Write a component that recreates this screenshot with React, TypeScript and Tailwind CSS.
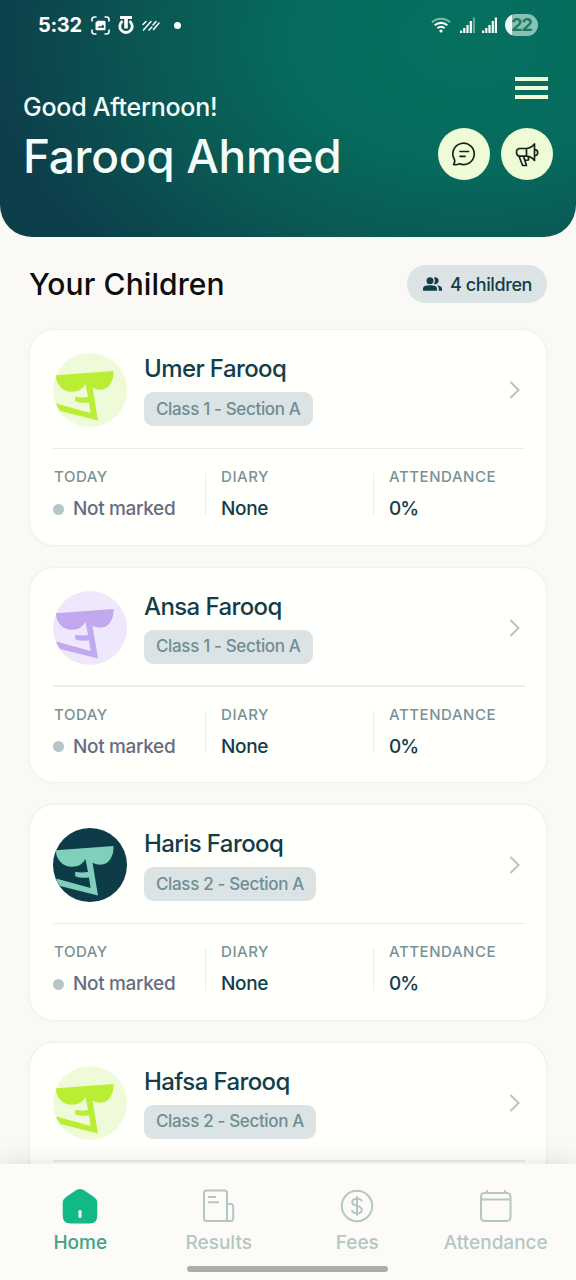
import type { ReactNode } from "react";

interface Child {
  name: string;
  section: string;
  bg: string;
  fg: string;
  stats: { today: string; diary: string; attendance: string } | null;
}

const EMPTY_STATS = { today: "Not marked", diary: "None", attendance: "0%" };

const CHILDREN: Child[] = [
  { name: "Umer Farooq", section: "Class 1 - Section A", bg: "#effbd8", fg: "#b9ee35", stats: EMPTY_STATS },
  { name: "Ansa Farooq", section: "Class 1 - Section A", bg: "#efe8fc", fg: "#c2a8ee", stats: EMPTY_STATS },
  { name: "Haris Farooq", section: "Class 2 - Section A", bg: "#0d3c48", fg: "#80cfba", stats: EMPTY_STATS },
  { name: "Hafsa Farooq", section: "Class 2 - Section A", bg: "#effbd8", fg: "#b9ee35", stats: null },
];

function Avatar({ bg, fg }: { bg: string; fg: string }) {
  return (
    <svg className="size-[74px] shrink-0" viewBox="0 0 74 74">
      <circle cx="37" cy="37" r="37" fill={bg} />
      <path
        fill={fg}
        d="M3 22.200 60.500 18C61 28 56 36.700 47.500 36.700Q43 36.700 39.500 34.800L45 67.500 7 58Q4 54 3 50.500L37.600 60 36 49.500Q28 50.500 22.200 48.300V43.800Q28 45 35 44L32.400 31Q29 38.500 19 38.800C10 39 2.500 31 3 22.200Z"
      />
    </svg>
  );
}

function SignalBars({ dim = false }: { dim?: boolean }) {
  return (
    <svg className={dim ? "ml-[9px] h-[16px] w-[15px]" : "ml-[7px] h-[16px] w-[15px]"} viewBox="0 0 15 16" fill="currentColor">
      <path d="M0 13.500h2.200V16H0ZM3.200 11h2.200v5H3.200ZM6.400 8h2.200v8H6.400ZM9.700 4h2.200v12H9.700Z" />
      <path d="M12.800.500H15V16h-2.200Z" opacity={dim ? 0.4 : 1} />
    </svg>
  );
}

function StatusBar() {
  return (
    <div className="flex h-[50px] items-center px-[38px] text-white">
      <span className="w-[44px] text-[20px] leading-none font-bold tracking-[-0.3px]">5:32</span>
      <svg className="ml-[9px] size-[19px]" viewBox="0 0 19 19" fill="none" stroke="currentColor" strokeWidth="1.600">
        <path d="M1 5.500V3.500Q1 1 3.500 1H5.500M13.500 1h2Q18 1 18 3.500v2M18 13.500v2q0 2.500-2.500 2.500h-2M5.500 18h-2Q1 18 1 15.500v-2" />
        <path d="M6.500 4.800h7a1 1 0 0 1 1 1v7.400a1 1 0 0 1-1 1h-8a1 1 0 0 1-1-1V6.800Z" fill="currentColor" stroke="none" />
        <path d="m6.500 11.800 2-2 1.500 1 1.500-2.300 1.500 1.500v1.800Z" fill="#0b5253" stroke="none" />
      </svg>
      <svg className="ml-[8px] h-[20px] w-[16px]" viewBox="0 0 16 20" fill="none" stroke="currentColor">
        <path d="M2 2.500h12" strokeWidth="3" />
        <path d="M8 2v11.500" strokeWidth="3.600" />
        <path d="M4.500 6.200a6.200 6.200 0 1 0 7 0" strokeWidth="2.800" />
      </svg>
      <svg className="ml-[8px] h-[11px] w-[18px]" viewBox="0 0 18 11" stroke="currentColor" strokeWidth="1.500" strokeLinecap="round">
        <path d="M1 4.500 4 1.500M1.500 10 9 1.500M7 10l2.800-3M11 5l3-3.500M11.500 9.500 17 3" />
      </svg>
      <span className="ml-[14px] size-[7px] rounded-full bg-white" />

      <svg className="ml-auto h-[16px] w-[20px]" viewBox="0 0 20 16" fill="none" stroke="currentColor" strokeWidth="2.200">
        <path d="M1 5.300a13.200 13.200 0 0 1 18 0" opacity=".5" />
        <path d="M3.700 8.300a9.200 9.200 0 0 1 12.600 0M6.500 11.300a5.200 5.200 0 0 1 7 0" />
        <circle cx="10" cy="14" r="1.600" fill="currentColor" stroke="none" />
      </svg>
      <SignalBars dim />
      <SignalBars />
      <div className="ml-[8px] flex h-[22px] w-[33px] items-center justify-center rounded-full bg-[linear-gradient(90deg,#eefaf6_22%,#8bc0b4_22%)] text-[18px] leading-none font-bold tracking-[-1px] text-[#1b7867]">
        22
      </div>
    </div>
  );
}

function RoundButton({ label, children }: { label: string; children: ReactNode }) {
  return (
    <button aria-label={label} className="flex size-[52px] items-center justify-center rounded-full bg-[#effbd6] text-[#152318]">
      {children}
    </button>
  );
}

function Header() {
  return (
    <header className="h-[236.500px] shrink-0 rounded-b-[32px] bg-[radial-gradient(500px_340px_at_470px_40px,#06705f_0%,#066b5d_35%,#0a5753_65%,#0d3f4b_95%)]">
      <StatusBar />
      <div className="flex justify-between pr-[23px] pl-[23px]">
        <div className="pt-[40.500px] text-[#f5fdfa]">
          <p className="text-[25px] leading-[32px] font-[450] tracking-[-0.25px]">Good Afternoon!</p>
          <h1 className="mt-[3px] text-[46px] leading-[60px] font-medium tracking-[-0.300px]">Farooq Ahmed</h1>
        </div>
        <div className="flex flex-col items-end pt-[27px]">
          <button aria-label="Menu" className="mr-[5px] flex w-[33px] flex-col gap-[5px]">
            <span className="h-[4px] bg-[#effbd6]" />
            <span className="h-[4px] bg-[#effbd6]" />
            <span className="h-[4px] bg-[#effbd6]" />
          </button>
          <div className="mt-[29px] flex gap-[11px]">
            <RoundButton label="Messages">
              <svg className="size-[24px]" viewBox="0 0 24 24" fill="none" stroke="currentColor" strokeWidth="1.700" strokeLinecap="round" strokeLinejoin="round">
                <path d="M1.500 22.500Q3.500 20 2.300 17.300A10.700 10.700 0 1 1 7.500 21.800Q4.500 23.200 1.500 22.500Z" />
                <path d="M8 9.500h8.500M8 14.300h5" />
              </svg>
            </RoundButton>
            <RoundButton label="Announcements">
              <svg className="mt-[2px] h-[24px] w-[24px]" viewBox="0 0 24 24" fill="none" stroke="currentColor" strokeWidth="1.700" strokeLinejoin="round">
                <path d="M11.500 5.500H5Q1.500 5.500 1.500 9.300t3.500 3.900h6.500ZM11.500 5.500C15 5 18 3 19.500 1v16.500C18 15.500 15 13.700 11.500 13.200M19.500 6.700q3.200 0 3.200 2.900t-3.200 2.900" />
                <path d="M4 13.200 7.700 22.500h3.800l-3-9.300M8.500 13.200l1.500 4.300 3.500-.500V13.700" />
              </svg>
            </RoundButton>
          </div>
        </div>
      </div>
    </header>
  );
}

function Stat({ label, children }: { label: string; children: ReactNode }) {
  return (
    <div>
      <p className="text-[15px] leading-[20px] font-[450] tracking-[0.550px] text-[#789397]">{label}</p>
      <div className="mt-[9px] flex items-center text-[19px] leading-[26px] font-medium tracking-[-0.350px] text-[#123d49]">
        {children}
      </div>
    </div>
  );
}

function ChildCard({ child }: { child: Child }) {
  return (
    <article className="h-[214.500px] shrink-0 rounded-[24px] bg-[#fffffc] px-[23px] pt-[23px] shadow-[0_0_3px_rgba(40,50,40,0.11)]">
      <div className="flex h-[74px] items-center">
        <Avatar bg={child.bg} fg={child.fg} />
        <div className="ml-[17px] flex flex-col items-start">
          <h3 className="text-[24px] leading-[30px] font-medium tracking-[-0.600px] text-[#123d49]">{child.name}</h3>
          <span className="mt-[8px] flex h-[34px] items-center rounded-[9px] bg-[#dbe3e5] px-[12px] pt-px text-[17px] font-[450] tracking-[-0.350px] text-[#6f8d94]">
            {child.section}
          </span>
        </div>
        <svg className="mr-[3px] ml-auto h-[18px] w-[11px]" viewBox="0 0 11 18" fill="none" stroke="#b9c3c4" strokeWidth="2">
          <path d="m1.500 1 8 8-8 8" />
        </svg>
      </div>
      <div className="mt-[20.500px] mr-[-2px] h-[1.500px] bg-[#ebeeec]" />
      {child.stats && (
        <div className="flex pt-[18px]">
          <div className="w-[152px] pl-px">
            <Stat label="TODAY">
              <span className="mr-[9px] ml-[-1px] size-[11px] rounded-full bg-[#b4c6c8]" />
              <span className="font-[450] text-[#676c80]">{child.stats.today}</span>
            </Stat>
          </div>
          <div className="mt-[6px] h-[42px] w-px bg-[#ebeeec]" />
          <div className="w-[167px] pl-[15px]">
            <Stat label="DIARY">{child.stats.diary}</Stat>
          </div>
          <div className="mt-[6px] h-[42px] w-px bg-[#ebeeec]" />
          <div className="pl-[15px]">
            <Stat label="ATTENDANCE">
              <span className="tracking-[-1px]">{child.stats.attendance}</span>
            </Stat>
          </div>
        </div>
      )}
    </article>
  );
}

const ICON = "h-[36px] w-[36px]";

function HomeIcon() {
  return (
    <svg className={ICON} viewBox="0 0 36 36">
      <path d="M14 2.200Q18-.400 22 2.200L32 9Q35.300 11.500 35.300 14.500V27.500Q35.300 35.500 27.300 35.500H8.700Q.700 35.500.700 27.500V14.500Q.700 11.500 4 9Z" fill="#12b886" />
      <path d="M18 23.500v5" stroke="#fff" strokeWidth="3" strokeLinecap="round" />
    </svg>
  );
}

function ResultsIcon() {
  return (
    <svg className={ICON} viewBox="0 0 36 36" fill="none" stroke="currentColor" strokeWidth="2">
      <rect x="3" y="2.500" width="23" height="30.500" rx="2.500" />
      <path d="M26 16h3.700q2.500 0 2.500 2.500v12q0 2.500-2.500 2.500H25M7 9h8M7 14.300h11" />
    </svg>
  );
}

function FeesIcon() {
  return (
    <svg className={ICON} viewBox="0 0 36 36" fill="none" stroke="currentColor" strokeWidth="2">
      <circle cx="18" cy="18" r="15.200" />
      <path d="M22.800 13.500q-.3-2.800-4.800-2.800t-4.800 3.300q0 2.800 4.800 3.900t4.800 4q0 3.400-4.800 3.400t-5-3.300M18 8.300v19.500" />
    </svg>
  );
}

function CalendarIcon() {
  return (
    <svg className={ICON} viewBox="0 0 36 36" fill="none" stroke="currentColor" strokeWidth="2">
      <rect x="3" y="5" width="29.500" height="28" rx="3.500" />
      <path d="M3 11.500h29.500M9 2.300V5M27 2.300V5" />
    </svg>
  );
}

const TABS = [
  { label: "Home", icon: <HomeIcon />, active: true },
  { label: "Results", icon: <ResultsIcon />, active: false },
  { label: "Fees", icon: <FeesIcon />, active: false },
  { label: "Attendance", icon: <CalendarIcon />, active: false },
];

function BottomNav() {
  return (
    <nav className="relative flex h-[116px] shrink-0 flex-col items-center bg-[#fcfbf7] px-[11px] shadow-[0_-2px_20px_rgba(60,60,40,0.14)]">
      <div className="grid w-full grid-cols-4 pt-[24px]">
        {TABS.map((tab) => (
          <div
            key={tab.label}
            className={`flex flex-col items-center text-[19px] leading-[26px] ${
              tab.active ? "font-medium text-[#3fa486]" : "font-[450] text-[#b5c6c5]"
            }`}
          >
            {tab.icon}
            <span className="mt-[6px]">{tab.label}</span>
          </div>
        ))}
      </div>
      <div className="mt-[10px] mr-px h-[6px] w-[201px] rounded-full bg-[#aeaea9]" />
    </nav>
  );
}

export default function App() {
  return (
    <div className="flex h-[1280px] w-[576px] flex-col overflow-hidden bg-[#fbf9f5] font-['Inter','Liberation_Sans',sans-serif]">
      <Header />
      <main className="flex min-h-0 flex-1 flex-col overflow-hidden px-[30px]">
        <div className="mt-[28.500px] flex h-[38px] shrink-0 items-center justify-between">
          <h2 className="ml-[-1px] text-[30px] leading-[38px] font-medium tracking-[0.100px] text-[#0c0d0c]">Your Children</h2>
          <div className="mr-[-1px] flex h-[38px] w-[140px] items-center rounded-full bg-[#dbe3e4] pl-[16px] text-[18px] font-[450] tracking-[-0.400px] text-[#123d49]">
            <svg className="mr-[8px] h-[14px] w-[19px]" viewBox="0 0 19 14" fill="currentColor">
              <circle cx="7" cy="3.700" r="3.500" />
              <path d="M0 13.800v-2.300Q0 8.200 7 8.200t7 3.300v2.300ZM11 .400a3.500 3.500 0 1 1 0 6.600q1.800-3.200 0-6.600M13.800 8.300Q19 9.200 19 11.600v2.200h-3.200v-2.300q0-2-2-3.200" />
            </svg>
            <span>4 children</span>
          </div>
        </div>
        <div className="mt-[27px] flex flex-col gap-[23px]">
          {CHILDREN.map((child) => (
            <ChildCard key={child.name} child={child} />
          ))}
        </div>
      </main>
      <BottomNav />
    </div>
  );
}
